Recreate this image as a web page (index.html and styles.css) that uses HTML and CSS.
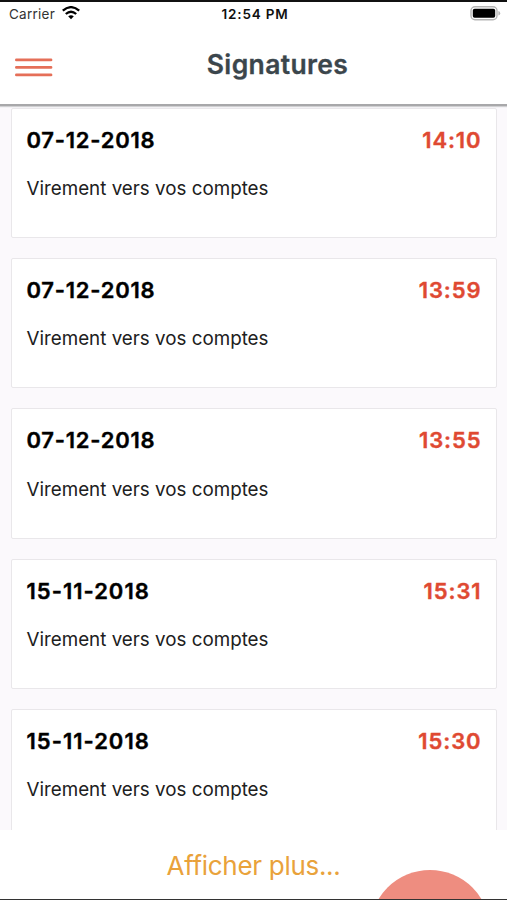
FILE: index.html
```html
<!DOCTYPE html>
<html lang="fr">
<head>
<meta charset="utf-8">
<title>Signatures</title>
<link rel="stylesheet" href="styles.css">
</head>
<body>
<div class="screen">
  <header class="header">
    <div class="status">
      <div class="carrier"><span>Carrier</span>
        <svg width="18" height="14" viewBox="0 0 18 14" fill="none" stroke="#000" stroke-width="2.3"><path d="M.8 4.7Q9-2.4 17.2 4.7M3.8 8Q9 3.4 14.2 8"/><path d="M6.2 10.3Q9 8 11.8 10.3L9 13.2Z" fill="#000" stroke="none"/></svg>
      </div>
      <div class="clock">12:54 PM</div>
      <svg class="battery" width="31" height="15" viewBox="0 0 31 15"><rect x="1" y=".8" width="26" height="13" rx="4" fill="none" stroke="#b5b5b5" stroke-width="1.4"/><rect x="2.8" y="2.8" width="22.4" height="9" rx="1.8"/><path d="M28.4 5Q30.2 5.5 30.2 7.3T28.4 9.6Z" fill="#b5b5b5"/></svg>
    </div>
    <div class="bar">
      <svg class="menu" width="38" height="20" viewBox="0 0 38 20" stroke="#e56f58" stroke-width="2.8" stroke-linecap="round"><path d="M1.4 2.9H36M1.4 10.4H36M1.4 17.9H36"/></svg>
      <h1>Signatures</h1>
    </div>
  </header>
  <main class="list">
    <article class="card"><div class="row"><b class="date">07-12-2018</b><b class="time">14:10</b></div><p>Virement vers vos comptes</p></article>
    <article class="card"><div class="row"><b class="date">07-12-2018</b><b class="time">13:59</b></div><p>Virement vers vos comptes</p></article>
    <article class="card"><div class="row"><b class="date">07-12-2018</b><b class="time">13:55</b></div><p>Virement vers vos comptes</p></article>
    <article class="card"><div class="row"><b class="date date-november">15-11-2018</b><b class="time">15:31</b></div><p>Virement vers vos comptes</p></article>
    <article class="card"><div class="row"><b class="date date-november">15-11-2018</b><b class="time">15:30</b></div><p>Virement vers vos comptes</p></article>
  </main>
  <footer class="footer"><span class="more">Afficher plus...</span><div class="fab"></div></footer>
</div>
</body>
</html>
```
FILE: styles.css
```css
* { box-sizing: border-box; }
body { margin: 0; font-family: Inter, sans-serif; color: #101010; background: #fff; }
.screen { height: 900px; display: flex; flex-direction: column; overflow: hidden; border-top: 2px solid #111; border-bottom: 1px solid #333; }
.header { height: 104px; flex: none; background: #fff; border-bottom: 2px solid #a8a8aa; box-shadow: 0 1px 1px #d0d0d2; z-index: 1; }
.status { height: 23px; display: grid; grid-template-columns: 1fr auto 1fr; align-items: center; padding: 0 6px 0 9px; font-size: 13.5px; }
.carrier { display: flex; align-items: center; gap: 6px; color: #333; }
.carrier span { letter-spacing: .25px; width: 47px; }
.carrier svg { margin-top: -1px; }
.clock { font-size: 13.5px; font-weight: 600; letter-spacing: .8px; }
.battery { justify-self: end; }
.bar { height: 79px; display: grid; grid-template-columns: 38px 1fr; align-items: center; padding: 5px 5px 0 15px; }
h1 { margin: -7px 0 0; text-align: center; font-size: 26.5px; line-height: 32px; font-weight: 600; letter-spacing: .35px; color: #3b464c; -webkit-text-stroke: .3px #3b464c; }
.list { height: 724px; flex: none; overflow: hidden; padding: 2px 10px 0 11px; background: #fbf9fc; display: flex; flex-direction: column; gap: 20px; }
.card { height: 130.2px; flex: none; background: #fff; border: 1px solid #e9e7ea; border-radius: 2px; padding: 17px 15px 0 14.5px; }
.row { display: flex; justify-content: space-between; font-size: 22px; line-height: 28px; }
.date, .time { font-weight: 600; -webkit-text-stroke: .4px currentColor; }
.date { color: #000; letter-spacing: .75px; }
.date-november { letter-spacing: 1px; }
.time { color: #df4932; letter-spacing: .9px; margin-right: -.5px; }
p { margin: 23.3px 0 0; font-size: 18.8px; line-height: 24px; color: #202020; }
.footer { flex: 1; position: relative; text-align: center; background: #fff; overflow: hidden; }
.more { color: #e9a23b; font-size: 26px; line-height: 71px; letter-spacing: -.3px; }
.fab { position: absolute; left: 370px; top: 40px; width: 120px; height: 120px; border-radius: 50%; background: #ee8d80; }
```
